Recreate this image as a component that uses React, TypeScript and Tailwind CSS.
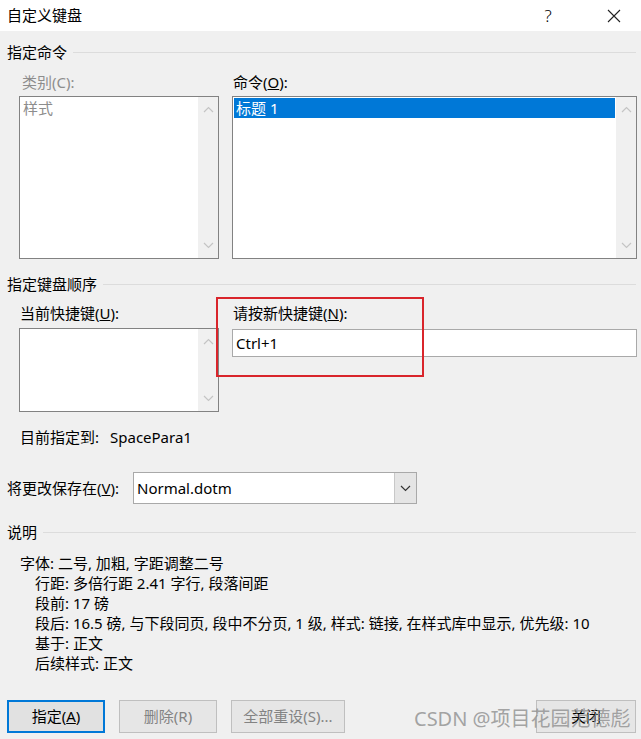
import type { ReactNode } from "react";

const font = "font-['Segoe_UI','Noto_Sans','Noto_Sans_CJK_SC',sans-serif]";

function Chevron({ up, color = "#c4c4c4" }: { up?: boolean; color?: string }) {
  return (
    <svg width="11" height="7" viewBox="0 0 11 7" aria-hidden>
      <path
        d={up ? "M1 6 L5.5 1.5 L10 6" : "M1 1 L5.5 5.5 L10 1"}
        fill="none"
        stroke={color}
        strokeWidth="1.2"
      />
    </svg>
  );
}

function Scrollbar() {
  return (
    <div className="flex w-[20px] shrink-0 flex-col items-center justify-between bg-[#f0f0f0] py-[9px]">
      <Chevron up />
      <Chevron />
    </div>
  );
}

function GroupHeader({ title }: { title: string }) {
  return (
    <div className="flex h-[20px] items-center gap-[6px]">
      <span className="text-[15px] leading-[20px] text-black">{title}</span>
      <div className="h-px flex-1 bg-[#dcdcdc]" />
    </div>
  );
}

function Label({ children, muted }: { children: ReactNode; muted?: boolean }) {
  return (
    <div
      className={`h-[18px] text-[15px] leading-[18px] ${muted ? "text-[#8d8d8d]" : "text-black"}`}
    >
      {children}
    </div>
  );
}

function Button({
  children,
  focused,
  disabled,
  className = "",
}: {
  children: ReactNode;
  focused?: boolean;
  disabled?: boolean;
  className?: string;
}) {
  return (
    <button
      type="button"
      className={`flex h-[33px] w-[98px] items-center justify-center text-[15px] ${
        focused
          ? "border-2 border-[#0078d7] bg-[#e1e1e1] text-black"
          : disabled
            ? "border border-[#bfbfbf] bg-[#e6e6e6] text-[#838383]"
            : "border border-[#adadad] bg-[#e1e1e1] text-black"
      } ${className}`}
    >
      {children}
    </button>
  );
}

export default function App() {
  const desc = [
    "行距: 多倍行距 2.41 字行, 段落间距",
    "段前: 17 磅",
    "段后: 16.5 磅, 与下段同页, 段中不分页, 1 级, 样式: 链接, 在样式库中显示, 优先级: 10",
    "基于: 正文",
    "后续样式: 正文",
  ];

  return (
    <div className={`relative h-[739px] w-[641px] overflow-hidden bg-[#f0f0f0] ${font}`}>
      {/* title bar */}
      <div className="flex h-[31px] items-center justify-between bg-white pl-[7px] pr-[4px]">
        <span className="text-[15px] text-black">自定义键盘</span>
        <div className="flex h-full items-center">
          <span className="mr-[20px] flex w-[46px] justify-center text-[17px] font-light text-black">?</span>
          <span className="flex w-[46px] justify-center">
            <svg width="14" height="14" viewBox="0 0 14 14" aria-hidden>
              <path d="M1 1 L13 13 M13 1 L1 13" stroke="#222" strokeWidth="1.1" />
            </svg>
          </span>
        </div>
      </div>

      <div className="pl-[7px] pr-[5px] pt-[11px]">
        <GroupHeader title="指定命令" />

        <div className="ml-[12px] mt-[11px] grid grid-cols-[200px_405px] gap-x-[13px]">
          <div className="flex flex-col">
            <div className="pl-[3px]">
              <Label muted>类别(C):</Label>
            </div>
            <div className="mt-[5px] flex h-[163px] border border-[#828282] bg-white">
              <div className="flex-1 px-[3px] text-[15px] leading-[22px] text-[#8d8d8d]">样式</div>
              <Scrollbar />
            </div>
          </div>
          <div className="flex flex-col">
            <div className="pl-[1px]">
              <Label>
                命令(<u>O</u>):
              </Label>
            </div>
            <div className="mt-[5px] flex h-[163px] border border-[#828282] bg-white">
              <div className="flex-1 p-[1px]">
                <div className="h-[20px] bg-[#0078d7] px-[2px] text-[15px] leading-[20px] text-white">
                  标题 1
                </div>
              </div>
              <Scrollbar />
            </div>
          </div>
        </div>

        <div className="mt-[15px]">
          <GroupHeader title="指定键盘顺序" />
        </div>

        <div className="ml-[12px] mt-[10px] grid grid-cols-[200px_405px] gap-x-[13px]">
          <div className="flex flex-col">
            <div className="pl-[1px]">
              <Label>
                当前快捷键(<u>U</u>):
              </Label>
            </div>
            <div className="mt-[6px] flex h-[84px] border border-[#828282] bg-white">
              <div className="flex-1" />
              <Scrollbar />
            </div>
          </div>
          <div className="flex flex-col">
            <div className="pl-[1px]">
              <Label>
                请按新快捷键(<u>N</u>):
              </Label>
            </div>
            <div className="mt-[7px] flex h-[28px] items-center border border-[#a9a9a9] bg-white px-[3px] text-[15px] text-black">
              Ctrl+1
            </div>
          </div>
        </div>

        <div className="ml-[13px] mt-[16px] flex h-[18px] items-center text-[15px] text-black">
          <span className="w-[90px]">目前指定到:</span>
          <span>SpacePara1</span>
        </div>

        <div className="mt-[26px] flex items-center">
          <span className="w-[126px] text-[15px] text-black">
            将更改保存在(<u>V</u>):
          </span>
          <div className="flex h-[32px] w-[284px] border border-[#a9a9a9] bg-white">
            <div className="flex flex-1 items-center px-[3px] text-[15px] text-black">Normal.dotm</div>
            <div className="flex w-[22px] items-center justify-center border-l border-[#c8c8c8] bg-[#e5e5e5]">
              <Chevron color="#333" />
            </div>
          </div>
        </div>

        <div className="mt-[18px]">
          <GroupHeader title="说明" />
        </div>

        <div className="ml-[13px] mt-[11px] text-[15px] leading-[20px] text-black">
          <div>字体: 二号, 加粗, 字距调整二号</div>
          {desc.map((line) => (
            <div key={line} className="pl-[15px]">
              {line}
            </div>
          ))}
        </div>

        <div className="mt-[27px] flex items-center">
          <Button focused>
            指定(<u>A</u>)
          </Button>
          <Button disabled className="ml-[14px]">
            删除(R)
          </Button>
          <Button disabled className="ml-[14px] w-[114px]">
            全部重设(S)...
          </Button>
          <Button disabled className="ml-auto w-[100px] !text-black">
            关闭
          </Button>
        </div>
      </div>

      {/* annotation + watermark */}
      <div className="pointer-events-none absolute left-[216px] top-[297px] h-[80px] w-[208px] border-2 border-[#d9252b]" />
      <div className="pointer-events-none absolute left-[414px] top-[704px] text-[20px] text-[#8e8e8e]/80">
        CSDN @项目花园范德彪
      </div>
    </div>
  );
}
